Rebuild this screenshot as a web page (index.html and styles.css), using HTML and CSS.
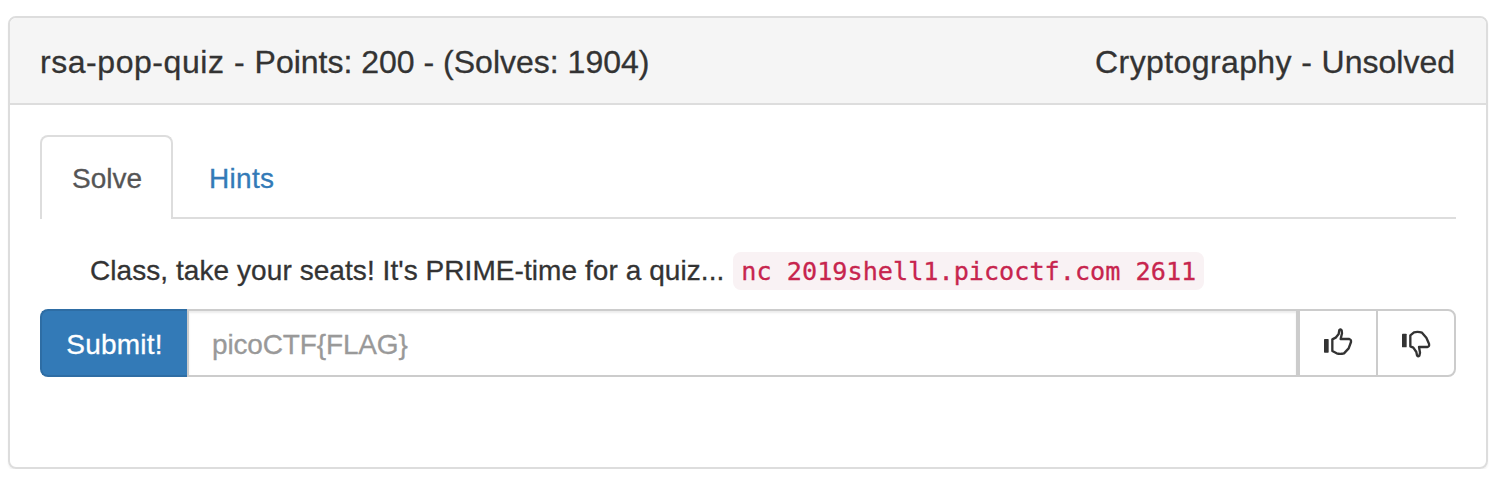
FILE: index.html
```html
<!DOCTYPE html>
<html lang="en">
<head>
<meta charset="utf-8">
<title>rsa-pop-quiz</title>
<link rel="stylesheet" href="styles.css">
</head>
<body>
<section class="panel">
  <header class="panel-heading">
    <span class="title"><span class="name">rsa-pop-quiz - </span>Points: 200 - (Solves: 1904)</span>
    <span class="category"><span class="subject">Cryptography - </span>Unsolved</span>
  </header>
  <div class="panel-body">
    <nav class="tabs">
      <a class="tab tab-active">Solve</a>
      <a class="tab tab-hints">Hints</a>
    </nav>
    <p class="description"><span class="prompt">Class, take your seats! It's PRIME-time for a quiz...</span><code>nc 2019shell1.picoctf.com 2611</code></p>
    <form class="flag-form">
      <button class="submit" type="button">Submit!</button>
      <input class="flag" type="text" placeholder="picoCTF{FLAG}">
      <button class="vote vote-up" type="button" aria-label="Like">
        <svg class="thumb" viewBox="0 0 180 135"><rect x="42" y="57" width="14" height="41" rx="2"/><path d="M67 58L77 53L86 42L88 30Q92 26 95 31L96 40L92 57H118Q124 59 123 66L116 85L102 100Q90 103 80 100L67 93Z"/></svg>
      </button>
      <button class="vote vote-down" type="button" aria-label="Dislike">
        <svg class="thumb" viewBox="0 0 180 135"><rect x="36" y="41" width="14" height="41" rx="2"/><path d="M61 46L72 37Q84 34 96 38L109 53L117 71Q119 80 112 81H87L90 98L88 107Q84 111 81 106L79 96L70 83L61 79Z"/></svg>
      </button>
    </form>
  </div>
</section>
</body>
</html>
```
FILE: styles.css
```css
* { box-sizing: border-box; }

body {
  margin: 0;
  padding: 16px 22px 0 8px;
  background: #fff;
  color: #333;
  font: 28px/40px "Liberation Sans", Arial, sans-serif;
  -webkit-text-stroke: 0.3px currentColor;
}

.panel {
  height: 453px;
  border: 2px solid #ddd;
  border-radius: 8px;
  box-shadow: 0 2px 2px rgba(0, 0, 0, 0.05);
}

.panel-heading {
  display: flex;
  justify-content: space-between;
  height: 87px;
  padding: 24px 31px 0 30px;
  border-bottom: 2px solid #ddd;
  border-radius: 6px 6px 0 0;
  background: #f5f5f5;
  font-size: 32px;
  line-height: 40px;
  white-space: nowrap;
}

.name { letter-spacing: 0.55px; }

.subject { letter-spacing: 0.4px; }

.panel-body { padding: 30px; }

.tabs {
  display: flex;
  gap: 4px;
  height: 84px;
  border-bottom: 2px solid #ddd;
}

.tab {
  height: 84px;
  padding: 22px 30px 0;
  border: 2px solid transparent;
  border-bottom: 0;
  border-radius: 8px 8px 0 0;
  color: #337ab7;
}

.tab-active {
  width: 133px;
  border-color: #ddd;
  background: #fff;
  color: #555;
}

.tab-hints { letter-spacing: 0.3px; }

.description {
  display: flex;
  align-items: center;
  gap: 9px;
  height: 38px;
  margin: 33px 0 19px;
  padding-left: 50px;
  white-space: nowrap;
}

.prompt { letter-spacing: 0.065px; }

code {
  height: 38px;
  padding: 0 8px;
  border-radius: 8px;
  background: #f9f2f4;
  color: #c7254e;
  font: 25.2px/39px "DejaVu Sans Mono", monospace;
}

.flag-form {
  display: flex;
  height: 68px;
}

.submit,
.flag,
.vote {
  height: 68px;
  margin: 0;
  border: 2px solid #ccc;
  background: #fff;
  font: inherit;
}

.submit {
  width: 147px;
  padding: 3px 0 0;
  border-color: #2e6da4;
  border-right: 0;
  border-radius: 8px 0 0 8px;
  background: #337ab7;
  color: #fff;
  letter-spacing: 0.2px;
}

.flag {
  flex: 1;
  min-width: 0;
  padding: 3px 23px 0;
  box-shadow: inset 0 2px 2px rgba(0, 0, 0, 0.075);
  letter-spacing: -0.15px;
}

.flag::placeholder { color: #999; opacity: 1; }

.vote {
  display: flex;
  width: 80px;
  padding: 9px 0 0 10px;
}

.vote-down {
  margin-left: -2px;
  padding-left: 12px;
  border-radius: 0 8px 8px 0;
}

.thumb {
  width: 60px;
  height: 45px;
  flex: none;
  fill: #333;
}

.thumb path {
  fill: none;
  stroke: #333;
  stroke-width: 7;
  stroke-linejoin: round;
}
```
